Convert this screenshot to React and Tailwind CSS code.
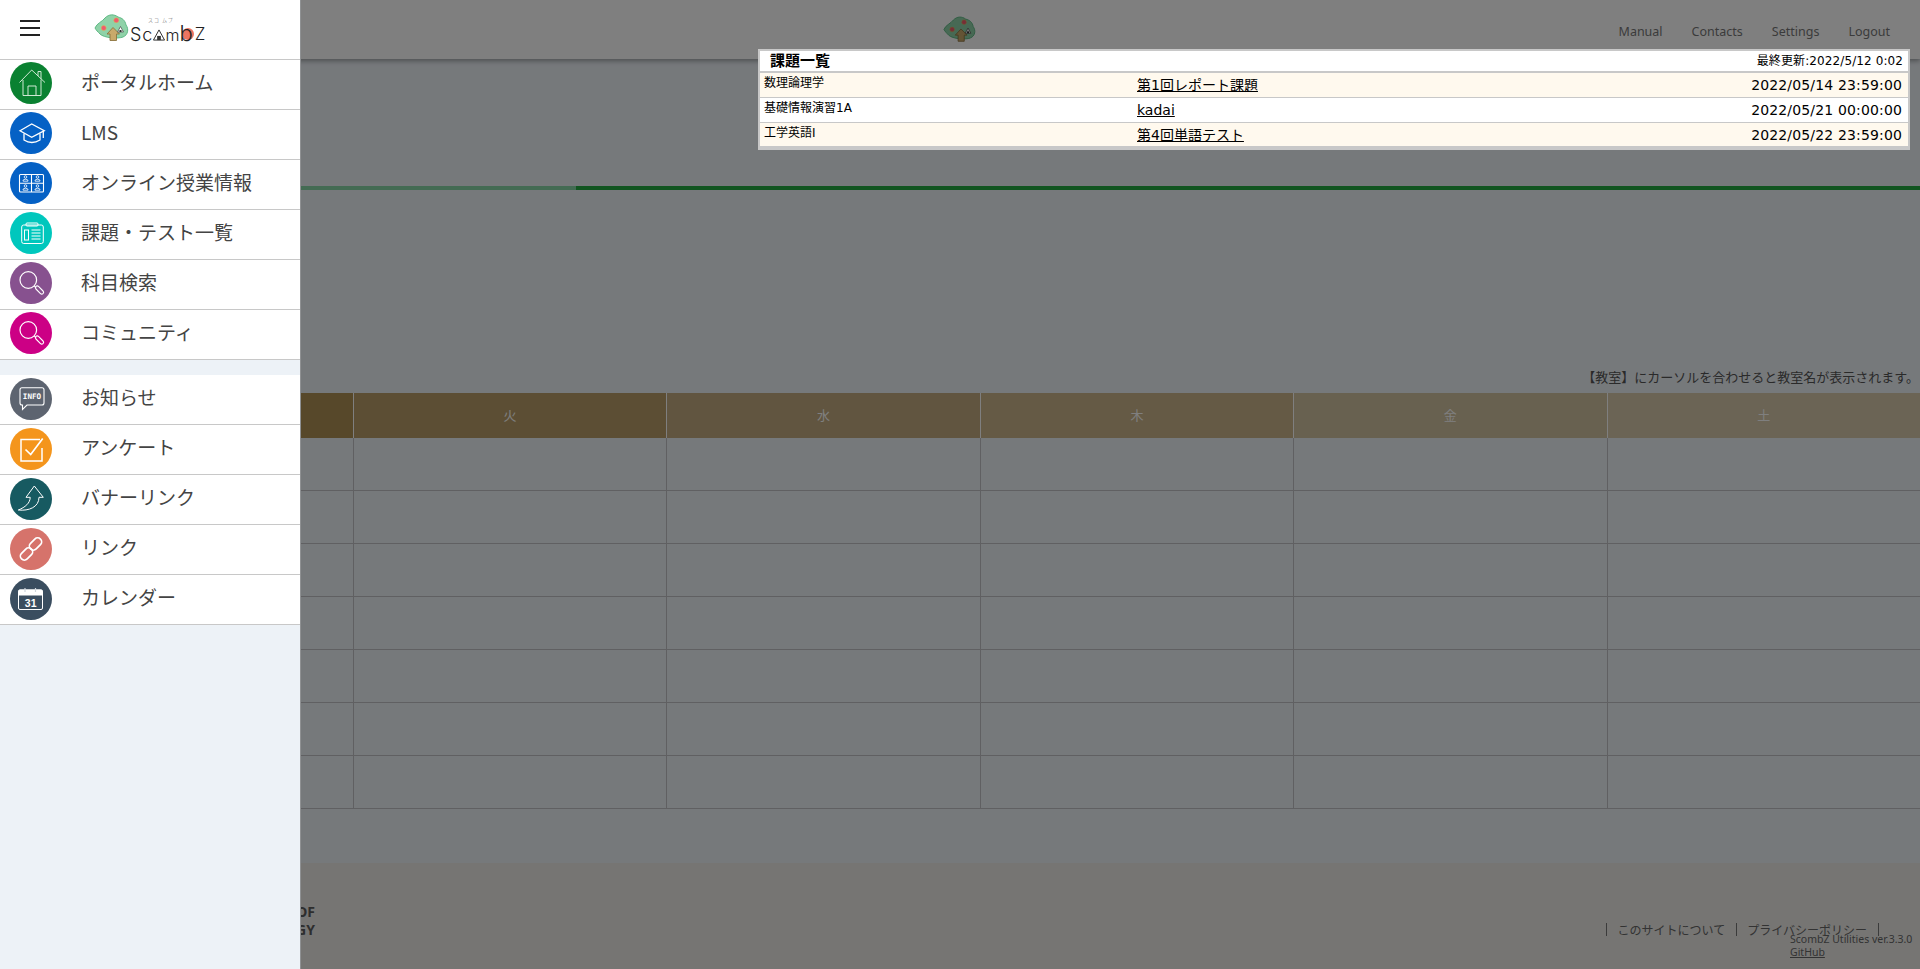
const MENU_TOP = [
  { label: 'ポータルホーム', bg: 'bg-[#0a8131]', icon: <HomeIcon /> },
  { label: 'LMS', bg: 'bg-[#0561c5]', icon: <CapIcon /> },
  { label: 'オンライン授業情報', bg: 'bg-[#0561c5]', icon: <OnlineIcon /> },
  { label: '課題・テスト一覧', bg: 'bg-[#00c7bd]', icon: <ClipboardIcon /> },
  { label: '科目検索', bg: 'bg-[#87518f]', icon: <SearchIcon /> },
  { label: 'コミュニティ', bg: 'bg-[#cc0085]', icon: <SearchIcon /> },
]

const MENU_BOTTOM = [
  { label: 'お知らせ', bg: 'bg-[#5d6470]', icon: <InfoIcon /> },
  { label: 'アンケート', bg: 'bg-[#f4951c]', icon: <CheckIcon /> },
  { label: 'バナーリンク', bg: 'bg-[#175a61]', icon: <ArrowIcon /> },
  { label: 'リンク', bg: 'bg-[#d6736b]', icon: <ChainIcon /> },
  { label: 'カレンダー', bg: 'bg-[#3a4d5f]', icon: <CalendarIcon /> },
]

const DAYS = [
  ['月', 'bg-[#ae9054]'],
  ['火', 'bg-[#b89c68]'],
  ['水', 'bg-[#c2aa80]'],
  ['木', 'bg-[#cab48a]'],
  ['金', 'bg-[#d0c2a0]'],
  ['土', 'bg-[#d6c8aa]'],
]

const TASKS = [
  ['数理論理学', '第1回レポート課題', '2022/05/14 23:59:00', 'bg-[#fff9ee]'],
  ['基礎情報演習1A', 'kadai', '2022/05/21 00:00:00', 'bg-white'],
  ['工学英語I', '第4回単語テスト', '2022/05/22 23:59:00', 'bg-[#fff9ee]'],
]

function Svg({ children }) {
  return (
    <svg viewBox="0 0 42 42" className="w-[42px] h-[42px]" fill="none" stroke="#fff" strokeWidth="1">
      {children}
    </svg>
  )
}

function HomeIcon() {
  return (
    <Svg>
      <g stroke="#cfe8d4">
        <path d="M9.5 20.5 21.7 8 35 20.5" />
        <path d="M28 14V9.5h3v8" />
        <path d="M13 18v15.5h18V18" />
        <path d="M18 33.5V24h8v9.5" />
      </g>
    </Svg>
  )
}

function CapIcon() {
  return (
    <Svg>
      <path d="M10 18.7 21.7 12l12.6 6.7-12.6 6.6z" strokeWidth="1.3" />
      <path d="M14 21.5V28q7.7 5 16 0v-6.5" strokeWidth="1.3" />
      <path d="M33.3 19v7" strokeWidth="1.3" />
    </Svg>
  )
}

function Person({ x, y }) {
  return (
    <g>
      <circle cx={x} cy={y - 1.6} r="1.3" />
      <path d={`M${x - 2.4} ${y + 2.6}v-1.2q2.4-1.6 4.8 0v1.2z`} />
    </g>
  )
}

function OnlineIcon() {
  return (
    <Svg>
      <rect x="9.5" y="12.5" width="24" height="17.5" rx="1" strokeWidth="1.1" />
      <path d="M21.5 12.5V30M9.5 21.2h24" strokeWidth="1.1" />
      <g strokeWidth="0.8">
        <Person x={15.5} y={16.6} />
        <Person x={27.5} y={16.6} />
        <Person x={15.5} y={25.6} />
        <Person x={27.5} y={25.6} />
      </g>
    </Svg>
  )
}

function ClipboardIcon() {
  return (
    <Svg>
      <rect x="11.7" y="13" width="21.6" height="18.5" rx="2" />
      <rect x="16" y="11" width="12" height="3" rx="1" />
      <rect x="14.5" y="18" width="4" height="10" />
      <path d="M21.5 18h9M21.5 21h9M21.5 24h9M21.5 27h9" strokeWidth="1.2" />
    </Svg>
  )
}

function SearchIcon() {
  return (
    <Svg>
      <circle cx="18.3" cy="18" r="8.3" strokeWidth="1.2" />
      <path d="M24.2 23.9 26 25.7" strokeWidth="1.2" />
      <rect x="24.5" y="26.2" width="10" height="3.6" rx="1.8" transform="rotate(45 29.5 28)" strokeWidth="1.1" />
    </Svg>
  )
}

function InfoIcon() {
  return (
    <Svg>
      <path d="M12 9.7h20a2 2 0 0 1 2 2V25a2 2 0 0 1-2 2H17l-4.5 4.5V27H12a2 2 0 0 1-2-2V11.7a2 2 0 0 1 2-2z" strokeWidth="1.1" />
      <text x="22" y="21" fill="#fff" stroke="none" textAnchor="middle" fontSize="7.6" fontWeight="700" fontFamily="'DejaVu Sans Mono', monospace">
        INFO
      </text>
    </Svg>
  )
}

function CheckIcon() {
  return (
    <Svg>
      <path d="M32 20v13H11V11.5h19" strokeWidth="1.5" />
      <path d="M15.5 21.5l5.2 5L32.7 10.5" strokeWidth="1.7" />
    </Svg>
  )
}

function ArrowIcon() {
  return (
    <Svg>
      <path d="M24.3 8 16 19.3h4.2c0 5.7-5 10-11.9 12.7 10.7 1.2 20.7-3 20.7-12.7h4.3z" strokeWidth="1" />
    </Svg>
  )
}

function ChainIcon() {
  return (
    <Svg>
      <g strokeWidth="1.7">
        <rect x="9.5" y="22" width="14" height="8" rx="4" transform="rotate(-45 16.5 26)" />
        <rect x="18.5" y="12" width="14" height="8" rx="4" transform="rotate(-45 25.5 16)" />
      </g>
    </Svg>
  )
}

function CalendarIcon() {
  return (
    <Svg>
      <rect x="8.5" y="12" width="24" height="19.5" rx="1.5" />
      <path d="M8.5 13.5a1.5 1.5 0 0 1 1.5-1.5h21a1.5 1.5 0 0 1 1.5 1.5V17h-24z" fill="#fff" />
      <path d="M15 10v4M25.5 10v4" stroke="#cfd6dc" strokeWidth="1.2" />
      <text x="20.7" y="29" fill="#fff" stroke="none" textAnchor="middle" fontSize="10.5" fontWeight="700" fontFamily="'Liberation Sans', sans-serif">
        31
      </text>
    </Svg>
  )
}

function Tree({ className }) {
  return (
    <svg viewBox="0 0 36 29" className={className}>
      <path
        d="M1 15C3 10 8 9 11 5c4-4 9-4 13-1 4 1 7 3 8 8 3 4 2 10-3 12-5 2-19 1-23-3-2-2-4-4-5-6z"
        fill="#8fd2a8"
        stroke="#5fb985"
        strokeWidth="1"
      />
      <circle cx="9.7" cy="15" r="2.5" fill="#ef5a6e" stroke="#d9c24f" strokeWidth="0.5" />
      <circle cx="22.3" cy="7.3" r="2.5" fill="#ef5a6e" stroke="#d9c24f" strokeWidth="0.5" />
      <path d="M19 14.5 13 21h3v6.5h6.5V21h3z" fill="#c9a96a" stroke="#8c7440" strokeWidth="0.9" />
      <path d="M26.5 13.5 29.5 19h-6z" fill="#fff" stroke="#555" strokeWidth="0.8" />
      <rect x="25.5" y="17" width="2" height="2" fill="#333" />
    </svg>
  )
}

function Logo() {
  return (
    <div className="relative flex items-end h-[30px] font-['Inter',sans-serif] font-light text-[#222]">
      <Tree className="w-[36px] h-[29px]" />
      <div className="flex items-end h-[18px]">
        <span className="text-[18px] leading-[15px] tracking-[1px]">Sc</span>
        <svg viewBox="0 0 13 13" className="w-[12px] h-[12px] mb-[1px]" fill="none">
          <path d="M6.5 1 12.5 12H.5z" fill="#fff" stroke="#222" strokeWidth="1" strokeLinejoin="round" />
          <rect x="4.5" y="7.5" width="4" height="4.5" fill="#333" />
        </svg>
        <span className="text-[16px] leading-[14px]">m</span>
        <span className="relative z-10 text-[22px] leading-[18px]">b</span>
        <span className="w-[12px] h-[12px] rounded-full bg-[#ec7461] -ml-[11px] mb-[2px]"></span>
        <span className="ml-[1px] text-[17px] leading-[15px]">Z</span>
      </div>
      <span className="absolute left-[54px] top-[5px] text-[5px] leading-[6px] tracking-[1px] text-[#444] font-['Noto_Sans_CJK_JP',sans-serif]">
        スコ ムブ
      </span>
    </div>
  )
}

function MenuItem({ label, bg, icon, iconTop }) {
  return (
    <a className="flex items-center h-[50px] bg-white border-b border-[#c8c8c8] pl-[10px]">
      <span className={`flex-none self-start w-[42px] h-[42px] rounded-full ${iconTop} ${bg}`}>{icon}</span>
      <span className="ml-[29px] -mt-[6px] text-[19px] leading-[26px] text-[#444]">{label}</span>
    </a>
  )
}

function Sidebar() {
  return (
    <aside className="fixed z-20 top-0 left-0 bottom-0 w-[301px] bg-[#edf2f7] border-r border-[#8f9193]">
      <div className="flex items-center h-[60px] bg-white border-b border-[#c8c8c8]">
        <button className="flex flex-col gap-[5px] ml-[20px] w-[20px] -mt-[3px]">
          <span className="h-[2px] bg-[#222]"></span>
          <span className="h-[2px] bg-[#222]"></span>
          <span className="h-[2px] bg-[#222]"></span>
        </button>
        <div className="ml-[54px] -mt-[6px]">
          <Logo />
        </div>
      </div>
      {MENU_TOP.map((m) => <MenuItem key={m.label} iconTop="mt-[2px]" {...m} />)}
      <div className="h-[15px]"></div>
      {MENU_BOTTOM.map((m) => <MenuItem key={m.label} iconTop="mt-[3px]" {...m} />)}
    </aside>
  )
}

function TaskPanel() {
  return (
    <section className="absolute z-20 top-[49px] left-[758px] w-[1152px] border-2 border-[#c8c8c8] bg-white text-black font-['DejaVu_Sans','Noto_Sans_CJK_JP',sans-serif]">
      <div className="flex justify-between items-center h-[22px] border-b-2 border-[#c8c8c8] pl-[10px] pr-[5px]">
        <b className="text-[15px] font-bold">課題一覧</b>
        <span className="text-[12px] tracking-[0.1px]">最終更新:2022/5/12 0:02</span>
      </div>
      {TASKS.map(([subject, title, due, bg]) => (
        <div key={title} className={`grid grid-cols-[373px_1fr_auto] h-[25px] pl-[4px] pr-[6px] border-b border-[#c8c8c8] last:border-b-2 ${bg}`}>
          <span className="text-[12px] leading-[21px]">{subject}</span>
          <a className="text-[14px] leading-[24px] underline">{title}</a>
          <span className="text-[14px] leading-[24px] tracking-[0.15px]">{due}</span>
        </div>
      ))}
    </section>
  )
}

export default function App() {
  return (
    <div className="relative h-[969px] overflow-hidden bg-[#edf2f7] font-['Noto_Sans_CJK_JP',sans-serif]">
      <header className="relative flex items-center h-[59px] bg-white shadow-[0_2px_5px_rgba(0,0,0,0.35)]">
        <Tree className="absolute left-[943px] top-[15px] w-[34px] h-[28px]" />
        <nav className="flex gap-[29px] ml-auto mr-[30px] mt-[6px] text-[12.5px] text-[#777] font-['Noto_Sans',sans-serif]">
          <a>Manual</a>
          <a>Contacts</a>
          <a>Settings</a>
          <a>Logout</a>
        </nav>
      </header>

      <div className="flex h-[4px] mt-[127px]">
        <div className="w-[576px] bg-[#86d6a6]"></div>
        <div className="flex-1 bg-[#22aa40]"></div>
      </div>

      <p className="mt-[178px] h-[25px] pr-[1px] text-right text-[13px] leading-[18px] text-[#555]">
        【教室】にカーソルを合わせると教室名が表示されます。
      </p>

      <div className="grid grid-cols-[39.5px_repeat(6,1fr)]">
        <div className="h-[45px]"></div>
        {DAYS.map(([d, bg]) => (
          <div key={d} className={`flex items-center justify-center h-[45px] pb-[2px] border-l border-[#fff] text-[13px] leading-none text-white ${bg}`}>
            {d}
          </div>
        ))}
        {Array.from({ length: 7 }).flatMap((_, r) => [
          <div key={`t${r}`} className="h-[53px]"></div>,
          ...DAYS.map(([d]) => (
            <div key={d + r} className="h-[53px] border-l border-b border-[#c0c0c4]"></div>
          )),
        ])}
      </div>

      <footer className="relative flex justify-between h-[106px] mt-[54px] bg-[#ecebe7]">
        <div className="w-[315px] pt-[40px] text-right text-[14px] leading-[18px] font-bold text-[#5c5c5c] font-['Noto_Sans',sans-serif]">
          SHIBAURA INSTITUTE OF
          <br />
          TECHNOLOGY
        </div>
        <ul className="flex items-start mt-[60px] mr-[41px] text-[12px] leading-[13px] text-[#666]">
          <li className="px-[11px] border-l border-[#777]">このサイトについて</li>
          <li className="pl-[10px] pr-[11px] border-l border-r border-[#777]">プライバシーポリシー</li>
        </ul>
        <div className="absolute left-[1790px] top-[70px] whitespace-nowrap text-[10.5px] leading-[13px] text-[#666] font-['Noto_Sans',sans-serif]">
          <div>ScombZ Utilities ver.3.3.0</div>
          <a className="underline">GitHub</a>
        </div>
      </footer>

      <div className="fixed z-10 inset-0 bg-black/50"></div>
      <Sidebar />
      <TaskPanel />
    </div>
  )
}
